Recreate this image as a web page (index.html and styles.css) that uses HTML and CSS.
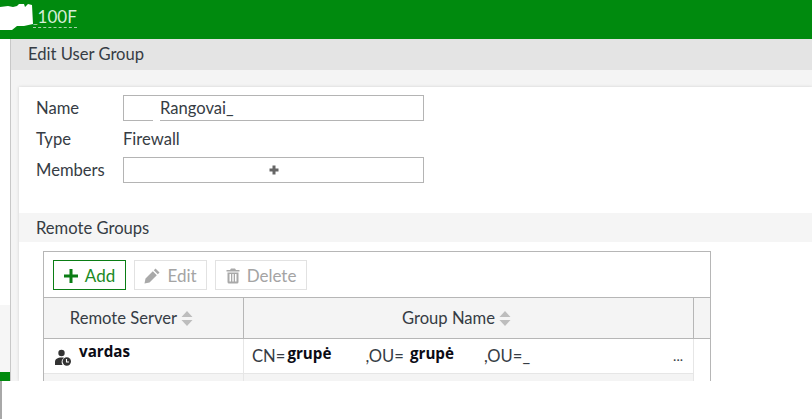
FILE: index.html
```html
<!DOCTYPE html>
<html lang="en">
<head>
<meta charset="utf-8">
<title>Edit User Group</title>
<link rel="stylesheet" href="styles.css">
</head>
<body>
<div class="frame">
  <header class="topbar">
    <svg class="blob" width="36" height="32" viewBox="0 0 36 32"><path d="M0 7 L8 6 L13 7 L17 6 L19 4 L24 4 L25 7 L28 4 L32 5 L33 24 L24 26 L17 26 L12 30 L0 30 Z" fill="#fff"/></svg>
    <span class="host"><span class="us">_</span>100F</span>
  </header>
  <div class="main">
    <aside class="side">
      <div class="side-top"></div>
      <div class="side-mid"></div>
      <div class="side-green"></div>
    </aside>
    <div class="content">
      <h1 class="title">Edit User Group</h1>
      <div class="canvas">
        <section class="card">
          <div class="form">
            <label class="lbl">Name</label>
            <div class="input name-input"><span class="gap"></span>Rangovai_</div>
            <label class="lbl">Type</label>
            <div class="val">Firewall</div>
            <label class="lbl">Members</label>
            <div class="input members-input">
              <svg width="10" height="10" viewBox="0 0 10 10"><path d="M3.500 0.500h3v3h3v3h-3v3h-3v-3h-3v-3h3z" fill="#666"/></svg>
            </div>
          </div>
          <h2 class="band">Remote Groups</h2>
          <div class="box">
            <div class="toolbar">
              <button class="btn btn-add">
                <svg width="14" height="14" viewBox="0 0 14 14"><path d="M5.500 0h3v5.500h5.500v3H8.500V14h-3V8.500H0v-3h5.500z" fill="#0a7d14"/></svg>Add
              </button>
              <button class="btn btn-off">
                <svg width="16" height="16" viewBox="0 0 16 16"><path d="M11.500 0.500 15.500 4.500 13.800 6.200 9.800 2.200zM8.800 3.200 12.800 7.200 5.500 14.500 0.500 15.500l1-5z" fill="#a9a9a9"/></svg>Edit
              </button>
              <button class="btn btn-off btn-del">
                <svg width="14" height="16" viewBox="0 0 14 16"><path d="M5 0.500h4l1 1.500h3.500v1.500H.500V2H4zM1.500 4.500h11V14a1.500 1.500 0 0 1-1.500 1.500H3A1.500 1.500 0 0 1 1.500 14zM3.500 6v7.500H5V6zM6.300 6v7.500h1.400V6zM9 6v7.500h1.500V6z" fill="#a9a9a9" fill-rule="evenodd"/></svg>Delete
              </button>
            </div>
            <div class="table">
              <div class="th">Remote Server<svg class="sort" width="12" height="15" viewBox="0 0 12 15"><path d="M6 0l5.500 6H.500zM6 15L.500 9h11z" fill="#bdbdbd"/></svg></div>
              <div class="th">Group Name<svg class="sort" width="12" height="15" viewBox="0 0 12 15"><path d="M6 0l5.500 6H.500zM6 15L.500 9h11z" fill="#bdbdbd"/></svg></div>
              <div class="th th-end"></div>
              <div class="td td-server">
                <svg class="user" width="16" height="17" viewBox="0 0 16 17"><circle cx="6.500" cy="4" r="3.200" fill="#333"/><path d="M0 16v-3c0-3 2.500-4.500 6.500-4.500 1 0 1.800.1 2.500.3A5 5 0 0 0 7.500 16z" fill="#333"/><circle cx="11.800" cy="12.500" r="4.200" fill="#333"/><path d="M11.500 10v3h2.500" stroke="#fff" stroke-width="1.100" fill="none"/></svg>
                <b class="redacted server-name">vardas</b>
              </div>
              <div class="td td-group">
                <span>CN=</span><b class="redacted g1">grupė</b><span class="ou1">,OU=</span><b class="redacted g2">grupė</b><span class="ou2">,OU=_</span><span class="dots">...</span>
              </div>
              <div class="td td-end"></div>
              <div class="tr-alt"></div>
              <div class="tr-alt"></div>
              <div class="td-end"></div>
            </div>
          </div>
        </section>
      </div>
    </div>
  </div>
</div>
<div class="crop-edge"></div>
</body>
</html>
```
FILE: styles.css
```css
* { box-sizing: border-box; }
html, body { margin: 0; padding: 0; background: #fff; overflow: hidden; }
body { width: 812px; height: 419px; font-family: Lato, "Liberation Sans", sans-serif; font-size: 16.600px; color: #363c44; }
.frame { height: 381px; display: flex; flex-direction: column; overflow: hidden; }
.crop-edge { width: 2px; height: 38px; background: #a8a8a8; }

.topbar { height: 39px; flex: none; background: #008a0e; position: relative; padding: 7px 0 0 33px; }
.blob { position: absolute; left: 0; top: 0; }
.host { display: inline-block; position: relative; font-size: 17px; line-height: 18px; height: 20px; color: #d6eed8; border-bottom: 1px dashed #a6cfa9; }
.us { font-size: 10px; }

.main { flex: 1; display: flex; min-height: 0; }
.side { width: 10px; flex: none; display: flex; flex-direction: column; background: #fff; }
.side-top { height: 266px; }
.side-mid { height: 67px; background: #f6f6f6; }
.side-green { height: 9px; background: #008a0e; }

.content { flex: 1; min-width: 0; border-left: 1px solid #c8c8c8; display: flex; flex-direction: column; }
.title { margin: 0; height: 31px; flex: none; background: #e4e4e4; font-size: inherit; font-weight: 400; line-height: 30px; padding-left: 17px; }
.canvas { flex: 1; background: #f4f4f4; padding: 17px 0 0 8px; min-height: 0; }
.card { background: #fff; height: 100%; box-shadow: 0 0 3px rgba(0,0,0,.15); }

.form { display: grid; grid-template-columns: 87px 301px; grid-template-rows: 26px 36px 26px; align-items: center; padding: 8px 0 0 17px; height: 126px; align-content: start; }
.lbl { line-height: 26px; }
.val { line-height: 26px; }
.input { height: 26px; border: 1px solid #b4b4b4; background: #fff; display: flex; align-items: center; position: relative; }
.name-input { padding-left: 36px; }
.gap { position: absolute; left: 29px; bottom: -1px; width: 7px; height: 3px; background: #fff; }
.members-input { justify-content: center; }

.band { margin: 0; height: 29px; background: #f5f5f5; font-size: inherit; font-weight: 400; line-height: 30px; padding-left: 17px; }

.box { margin: 9px 0 0 24px; width: 668px; height: 140px; border: 1px solid #b6b6b6; border-bottom: 0; display: flex; flex-direction: column; overflow: hidden; }
.toolbar { height: 46px; flex: none; display: flex; gap: 8px; padding: 8px 0 0 9px; border-bottom: 1px solid #b6b6b6; }
.btn { height: 30px; width: 73px; background: #fff; font: inherit; font-size: 17px; display: flex; align-items: center; justify-content: center; gap: 7px; padding: 1px 0 0; }
.btn-add { border: 1px solid #0a7d14; color: #1b8a24; }
.btn-off { border: 1px solid #e2e2e2; color: #a4a4a4; }
.btn-del { width: 92px; }

.table { display: grid; grid-template-columns: 200px 450px 16px; grid-template-rows: 41px 35px 1fr; flex: 1; }
.th { background: #f4f4f4; border-bottom: 1px solid #b6b6b6; border-right: 1px solid #b6b6b6; display: flex; align-items: center; justify-content: center; gap: 4px; padding-right: 24px; }
.th-end { border-right: 0; padding-right: 0; }
.td { border-bottom: 1px solid #e6e6e6; border-right: 1px solid #e6e6e6; background: #fff; }
.td-end { background: #fff; border-right: 0; }
.td-end.td { border-bottom: 0; }
.td-server { display: flex; align-items: center; padding: 0 0 0 11px; gap: 8px; }
.user { position: relative; top: 1px; }
.redacted { font-family: "Open Sans", sans-serif; font-weight: 700; font-size: 15.200px; color: #0b0b14; }
.server-name { position: relative; top: -5px; }
.td-group { display: flex; align-items: center; padding-left: 8px; position: relative; }
.g1 { margin-left: 2px; position: relative; top: -3px; }
.ou1 { margin-left: 34px; }
.g2 { margin-left: 6px; position: relative; top: -3px; }
.ou2 { margin-left: 30px; }
.dots { position: absolute; right: 10px; top: 8px; font-size: 14px; }
.tr-alt { background: #f4f4f4; border-right: 1px solid #e6e6e6; }
```
